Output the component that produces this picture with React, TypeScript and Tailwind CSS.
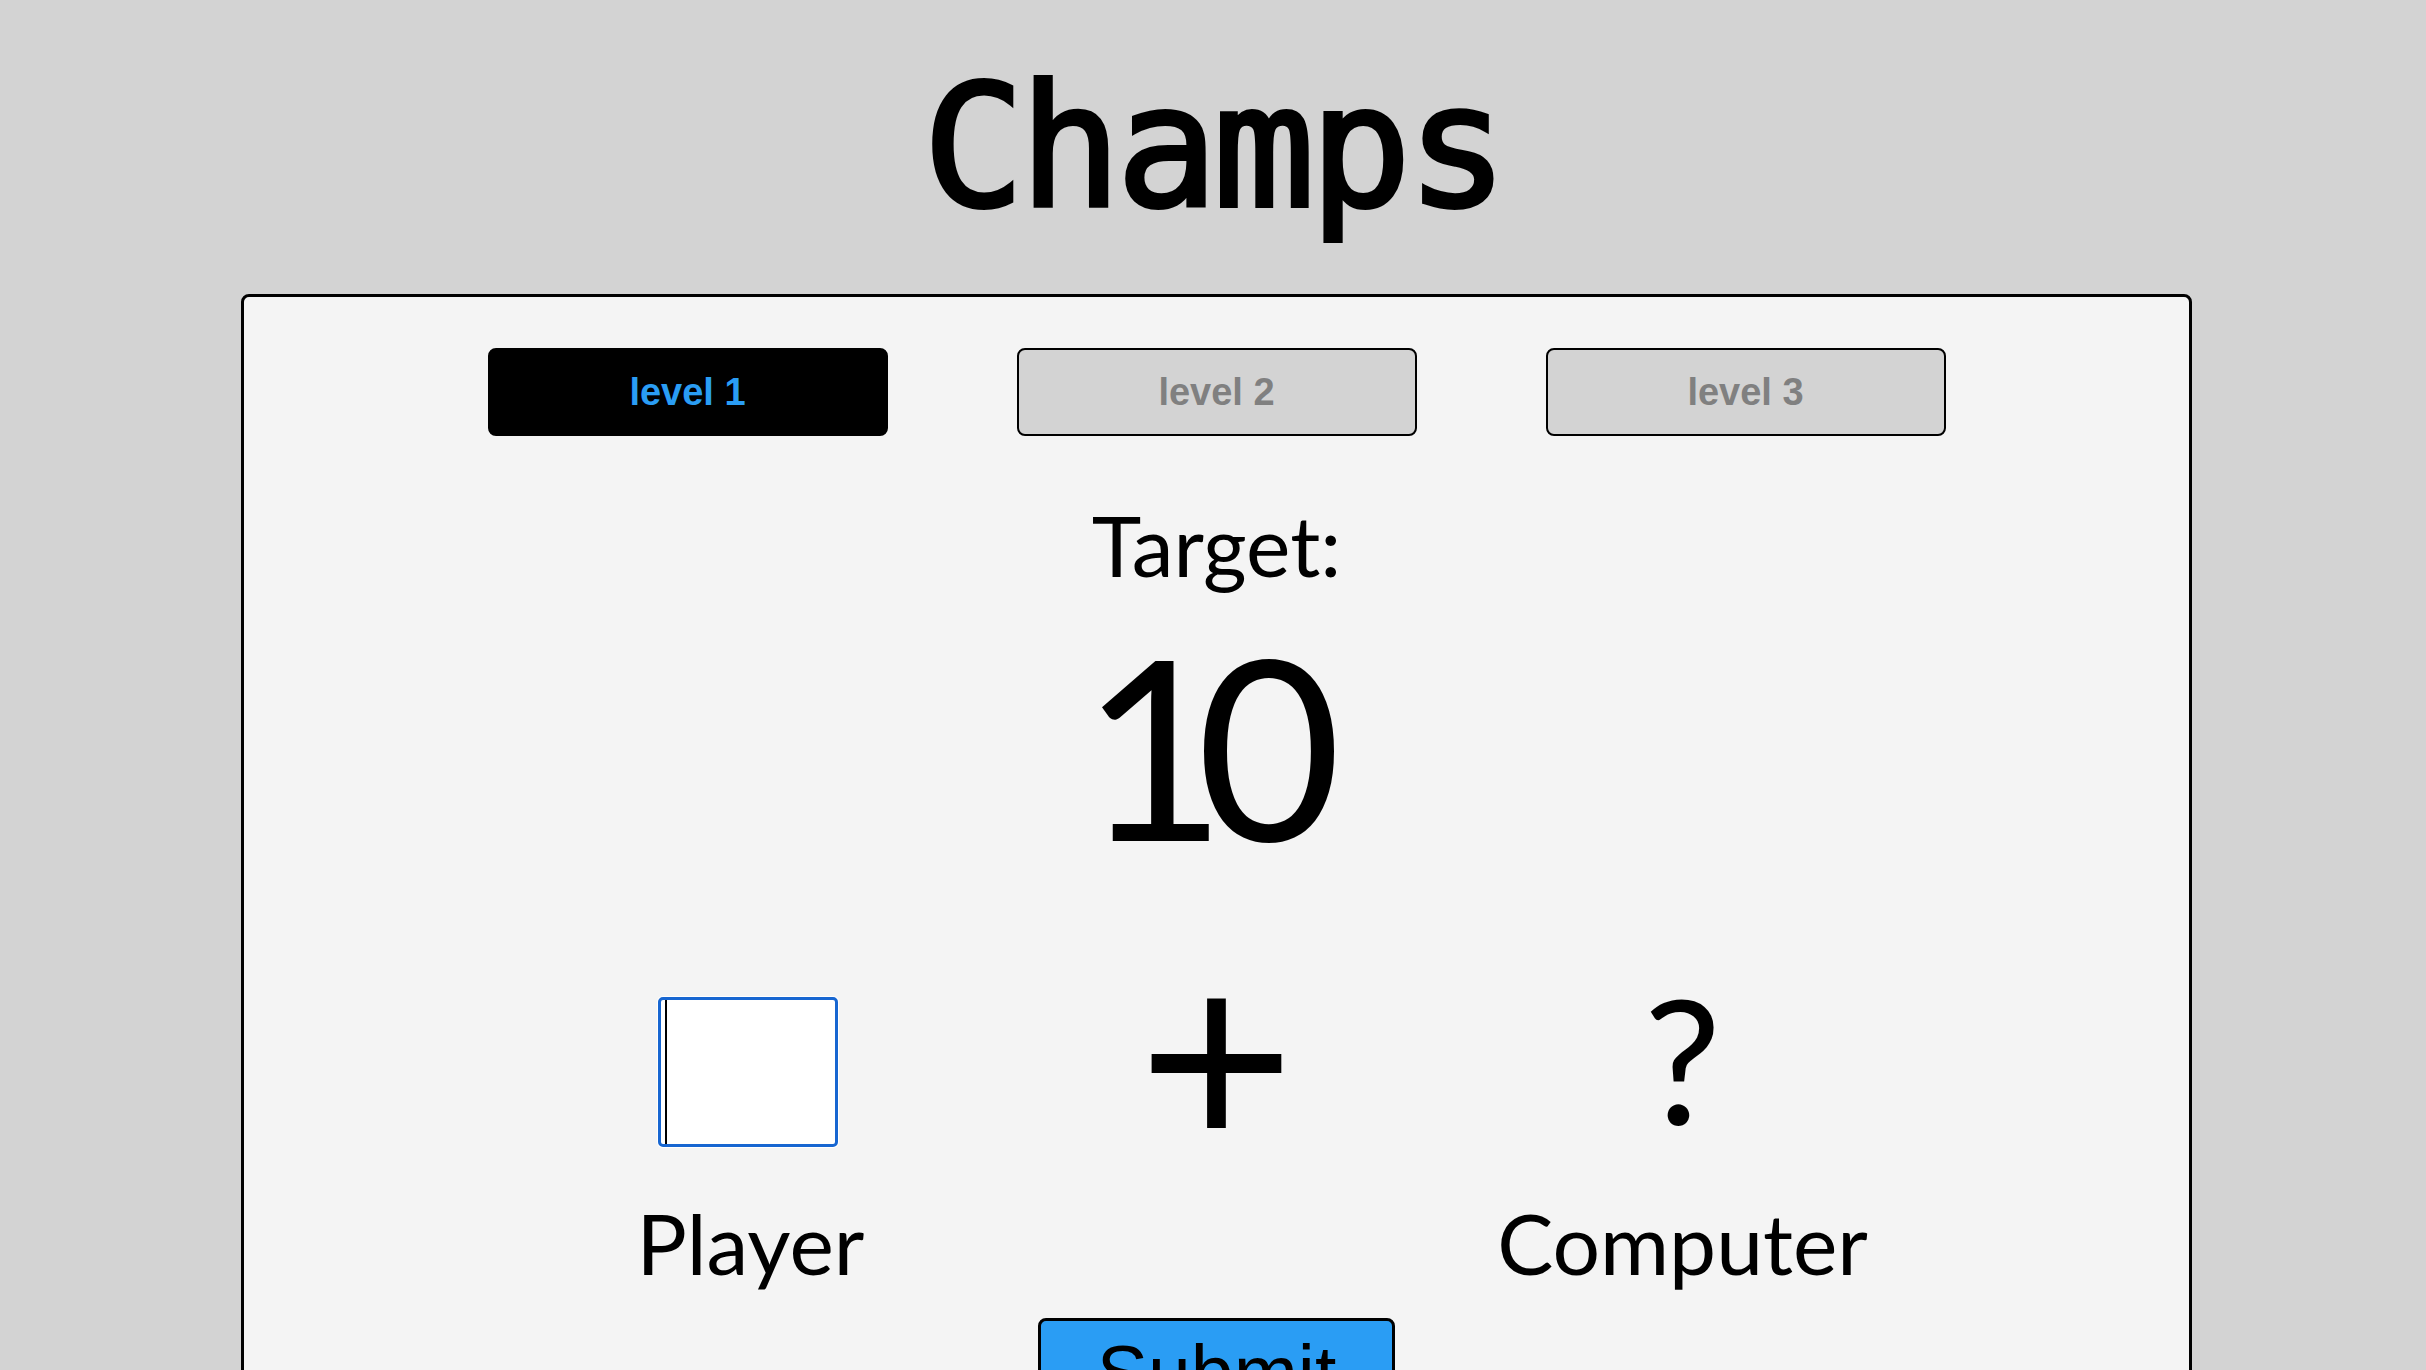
import React, { useState } from 'react';

const LEVELS = ['level 1', 'level 2', 'level 3'];

const App: React.FC = () => {
  const [level, setLevel] = useState(0);
  const [guess, setGuess] = useState('');

  return (
    <div className="min-h-screen bg-[#d3d3d3] pt-[63px]">
      <h1 className="text-center font-['DejaVu_Sans_Mono',monospace] text-[169px] leading-none tracking-[-5px] text-black [-webkit-text-stroke:4px_black]">
        Champs
      </h1>

      <div className="ml-[241px] mt-[62px] w-[1951px] rounded-[8px] border-[3px] border-black bg-[#f4f4f4] pt-[51px] pb-[60px]">
        {/* Level tabs */}
        <div className="flex justify-center gap-[129px]">
          {LEVELS.map((label, i) => (
            <button
              key={label}
              onClick={() => setLevel(i)}
              className={`h-[88px] w-[400px] rounded-[8px] border-2 border-black font-['Liberation_Sans',Arial,sans-serif] text-[38px] font-bold ${
                level === i ? 'bg-black text-[#2a9df4]' : 'bg-[#d3d3d3] text-[#808080]'
              }`}
            >
              {label}
            </button>
          ))}
        </div>

        <div className="font-['Lato',sans-serif] text-black">
          <p className="mt-[67px] text-center text-[84px] leading-none">Target:</p>
          <p className="mt-[32px] pr-[40px] text-center text-[250px] leading-none tracking-[-30px]">10</p>

          {/* Sum row */}
          <div className="mt-[128px] grid grid-cols-[466px_466px_466px] justify-center">
            <div className="flex justify-center">
              <div className="relative mr-[6px] h-[150px] w-[180px]">
                <input
                  value={guess}
                  onChange={e => setGuess(e.target.value)}
                  className="h-full w-full rounded-[5px] border-[3px] border-[#1766d1] bg-white px-[6px] text-[100px] caret-transparent outline-none ring-1 ring-white"
                />
                <span className="absolute left-[7px] top-[3px] bottom-[3px] w-[2px] bg-black" />
              </div>
            </div>
            <div className="flex justify-center">
              <span className="-mt-[42px] font-['DejaVu_Sans',sans-serif] text-[204px] leading-none [-webkit-text-stroke:2px_black]">+</span>
            </div>
            <div className="flex justify-center">
              <span className="-mt-[25px] text-[173px] leading-none">?</span>
            </div>
          </div>

          <div className="mt-[42px] grid grid-cols-[466px_466px_466px] justify-center text-[84px] leading-none">
            <p className="text-center">Player</p>
            <div />
            <p className="text-center">Computer</p>
          </div>
        </div>

        <div className="mt-[33px] flex justify-center">
          <button className="w-[357px] rounded-[8px] border-[3px] border-black bg-[#2a9df4] pt-[14px] pb-[18px] font-['Liberation_Sans',Arial,sans-serif] text-[77px] leading-none text-black">
            Submit
          </button>
        </div>
      </div>
    </div>
  );
};

export default App;
